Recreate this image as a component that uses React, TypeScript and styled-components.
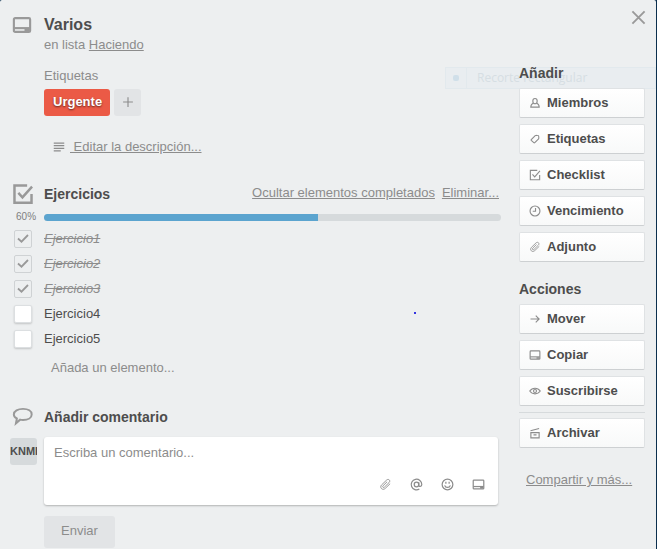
import React, { useState } from "react";
import styled, { createGlobalStyle, css } from "styled-components";

const GlobalStyle = createGlobalStyle`
  *, *::before, *::after { box-sizing: border-box; }
  body {
    margin: 0;
    background: #0b2f4e;
    color: #4d4d4d;
    font: 13px/16px "Liberation Sans", Arial, sans-serif;
  }
  button, input, textarea { font: inherit; color: inherit; margin: 0; }
`;

type IconName =
  | "card" | "check" | "comment" | "lines" | "member" | "tag" | "clock"
  | "clip" | "arrow" | "eye" | "archive" | "at" | "smile" | "close" | "plus";

const shapes: Record<IconName, React.ReactNode> = {
  card: (
    <>
      <rect x="1.5" y="2.5" width="13" height="11" rx="1" />
      <path d="M1.5 10.5h13" />
      <path d="M10 11h4v2h-4z" fill="currentColor" stroke="none" />
    </>
  ),
  check: (
    <>
      <path d="M11 1.8H1.8v12.6h12.4V8" />
      <path d="M4.6 7.2l3 3.2L14.6 2.6" />
    </>
  ),
  comment: (
    <path d="M8.400 2.200c3.900 0 6.600 1.700 6.600 4.200s-2.700 4.200-6.600 4.200c-.8 0-1.500 0-2.200-.2L3 13.200l.7-3.700C2.300 8.800 1.400 7.700 1.400 6.400c0-2.500 3.100-4.200 7-4.200z" />
  ),
  lines: <path d="M2 3.500h12M2 6.500h12M2 9.500h12M2 12.500h8" />,
  member: (
    <>
      <path d="M8 2c1.900 0 2.900 1.400 2.900 3.300S9.700 9 8 9 5.100 7.200 5.100 5.300 6.100 2 8 2z" />
      <path d="M5.600 8.300c-1.900.8-3.200 2.200-3.200 5.200h11.200c0-3-1.300-4.400-3.200-5.200" />
    </>
  ),
  tag: (
    <path d="M3 8.800l5.300-5.300c.4-.4 3.900-.3 4.300.1s.7 3.700.2 4.200l-5.100 5.100c-.4.400-.9.400-1.300 0L3 9.900c-.3-.3-.3-.8 0-1.100z" />
  ),
  clock: (
    <>
      <circle cx="8" cy="8" r="6.600" />
      <path d="M8.700 4v4.400H5" />
    </>
  ),
  clip: (
    <path d="M10 4.600l-5 4.900c-1.300 1.400.4 3 1.700 1.700l5.700-5.600c2.300-2.400-.7-5.300-3.100-3L3.300 8.400c-3.200 3.300 1.100 7.600 4.400 4.400l6-5.800" />
  ),
  arrow: <path d="M2 8h11.500M9 3.500L13.500 8 9 12.500" />,
  eye: (
    <>
      <path d="M1 8c3.300-5 10.700-5 14 0-3.300 5-10.700 5-14 0z" />
      <circle cx="8" cy="8" r="2" />
    </>
  ),
  archive: (
    <>
      <path d="M2.500 7.500h11v7h-11zM2 5l11.500-3M6 10.500h4" />
    </>
  ),
  at: (
    <>
      <circle cx="8" cy="8" r="2.800" />
      <path d="M10.800 5.200v3.600c0 2.200 3.700 2.200 3.700-.8A6.500 6.500 0 1 0 11.500 13.500" />
    </>
  ),
  smile: (
    <>
      <circle cx="8" cy="8" r="6.600" />
      <path d="M4.500 9c1 3.400 6 3.400 7 0M6 4.500v2.500M10 4.500v2.500" />
    </>
  ),
  close: <path d="M1.500 1.500l13 13M14.500 1.500l-13 13" />,
  plus: <path d="M8 1.500v13M1.500 8h13" />,
};

const Svg = styled.svg<{ $size: number; $weight: number }>`
  display: block;
  flex: none;
  width: ${(p) => p.$size}px;
  height: ${(p) => p.$size}px;
  fill: none;
  stroke: currentColor;
  stroke-width: ${(p) => p.$weight};
  color: ${(p) => (p.$size > 14 ? "#999" : "#8c8c8c")};
`;

function Icon({ name, size = 12, weight = 1.5 }: { name: IconName; size?: number; weight?: number }) {
  return (
    <Svg viewBox="0 0 16 16" $size={size} $weight={weight} aria-hidden="true">
      {shapes[name]}
    </Svg>
  );
}

const Panel = styled.div`
  position: relative;
  display: grid;
  grid-template-columns: minmax(0, 1fr) 126px;
  column-gap: 18px;
  min-height: 100vh;
  margin-right: 1px;
  padding-right: 11px;
  background: #edeff0;
  border-radius: 2px 2px 0 0;
`;

const Main = styled.main`
  padding-top: 13px;
`;

const Row = styled.div<{ $top?: number }>`
  display: grid;
  grid-template-columns: 44px minmax(0, 1fr);
  align-items: center;
  margin-top: ${(p) => p.$top ?? 0}px;
`;

const Gutter = styled.div`
  padding-left: 12px;
`;

const Indent = styled.div`
  padding-left: 44px;
`;

const Title = styled.h1`
  margin: 0;
  font-size: 16px;
  line-height: 24px;
`;

const Heading = styled.h2`
  margin: 0;
  font-size: 14px;
  line-height: 20px;
`;

const Muted = styled.p`
  margin: 0;
  color: #8c8c8c;
`;

const Link = styled.a`
  color: #8c8c8c;
  text-decoration: underline;
`;

const LabelsTitle = styled.h3`
  margin: 15px 0 5px;
  color: #8c8c8c;
  font-size: 13px;
  font-weight: normal;
`;

const Labels = styled.div`
  display: flex;
  gap: 4px;
`;

const labelBox = css`
  height: 27px;
  border: 0;
  border-radius: 3px;
`;

const RedLabel = styled.button`
  ${labelBox}
  padding: 0 8px 1px 9px;
  background: #eb5a46;
  color: #fff;
  font-weight: bold;
  text-shadow: 0 1px 2px rgba(0, 0, 0, 0.6);
`;

const AddLabel = styled.button`
  ${labelBox}
  display: grid;
  place-items: center;
  width: 27px;
  padding: 0 0 2px;
  background: #e2e4e6;
`;

const Description = styled.div`
  display: flex;
  align-items: center;
  gap: 4px;
  margin-top: 23px;
  padding-left: 8px;
`;

const ChecklistHead = styled.div`
  display: flex;
  align-items: center;
  gap: 7px;
  padding-right: 2px;
`;

const ChecklistLink = styled(Link)`
  margin-bottom: 2px;
`;

const Spacer = styled.span`
  flex: 1;
`;

const Percent = styled.span`
  padding-left: 16px;
  color: #808080;
  font-size: 10px;
  line-height: 12px;
`;

const Track = styled.div`
  height: 7px;
  overflow: hidden;
  border-radius: 4px;
  background: #d6dadc;
`;

const Fill = styled.div`
  height: 100%;
  background: #5ba4cf;
`;

const Items = styled.ul`
  display: grid;
  gap: 7px;
  margin: 7px 0 12px;
  padding: 0 0 0 14px;
  list-style: none;
`;

const Item = styled.label<{ $done: boolean }>`
  display: flex;
  align-items: center;
  gap: 12px;
  height: 18px;
  ${(p) => p.$done && css`
    color: #8c8c8c;
    font-style: italic;
    text-decoration: line-through;
  `}
`;

const BoxWrap = styled.span`
  display: grid;
  width: 18px;
  height: 18px;
  place-items: center;

  & > * { grid-area: 1 / 1; }
  & > svg { pointer-events: none; }
`;

const Box = styled.input`
  appearance: none;
  width: 18px;
  height: 18px;
  border: 1px solid #dcdfe1;
  border-radius: 2px;
  background: #fff;
  box-shadow: 0 1px 2px rgba(0, 0, 0, 0.18);

  &:checked {
    border-color: #cfd2d4;
    background: transparent;
    box-shadow: none;
  }
`;

const AddItem = styled.button`
  display: block;
  padding: 0 0 0 7px;
  border: 0;
  background: none;
  color: #8c8c8c;
`;

const Composer = styled.form`
  display: grid;
  grid-template-columns: 27px minmax(0, 1fr);
  column-gap: 7px;
  margin: 10px 3px 0 10px;
`;

const Avatar = styled.span`
  height: 27px;
  margin-top: 1px;
  overflow: hidden;
  border-radius: 3px;
  background: #d6dadc;
  font-size: 11px;
  font-weight: bold;
  line-height: 27px;
`;

const CommentBox = styled.div`
  display: flex;
  flex-direction: column;
  height: 68px;
  border-radius: 3px;
  background: #fff;
  box-shadow: 0 1px 2px rgba(0, 0, 0, 0.25);
`;

const CommentInput = styled.textarea`
  flex: 1;
  padding: 8px 10px 0;
  border: 0;
  outline: 0;
  resize: none;
  overflow: hidden;
  background: transparent;

  &::placeholder { color: #8c8c8c; opacity: 1; }
`;

const Tools = styled.div`
  display: flex;
  justify-content: flex-end;
  gap: 18px;
  padding: 0 13px 14px 0;
`;

const IconButton = styled.button`
  padding: 0;
  border: 0;
  background: none;
`;

const Send = styled.button`
  grid-column: 2;
  justify-self: start;
  height: 32px;
  margin-top: 11px;
  padding: 0 17px 2px;
  border: 0;
  border-radius: 3px;
  background: #e2e4e6;
  color: #8c8c8c;
`;

const Sidebar = styled.aside`
  display: flex;
  flex-direction: column;
  padding-top: 10px;
`;

const Close = styled(IconButton)`
  align-self: flex-end;
  margin: 0 -1px 38px 0;
`;

const Group = styled.section`
  position: relative;
  z-index: 1;
  display: grid;
  gap: 6px;
  margin-bottom: 17px;

  & > h2 { margin-bottom: -1px; }
`;

const Action = styled.button`
  display: flex;
  align-items: center;
  gap: 6px;
  height: 30px;
  padding: 0 9px 1px;
  border: 1px solid #dfe2e4;
  border-bottom-color: #cdd0d2;
  border-radius: 2px;
  background: linear-gradient(#fff, #f8f9f9);
  font-weight: bold;
`;

const Divider = styled.hr`
  width: 100%;
  height: 1px;
  margin: 0 0 -1px;
  border: 0;
  background: #d6dadc;
`;

const Share = styled(Link)`
  margin: 7px 0 0 7px;
`;

const Ghost = styled.div`
  position: absolute;
  top: 67px;
  right: 0;
  display: flex;
  width: 211px;
  height: 22px;
  align-items: center;
  border: 1px solid #e2e9ed;
  background: #e9edf0;
  color: #d6dee3;
  font: 12px/20px "Open Sans", sans-serif;
`;

const GhostMark = styled.span`
  display: grid;
  width: 21px;
  height: 20px;
  margin-right: 10px;
  place-items: center;
  border-right: 1px solid #e2e9ed;

  &::before {
    content: "";
    width: 6px;
    height: 6px;
    border-radius: 2px;
    background: #d0dfe9;
  }
`;

const Dot = styled.span`
  position: absolute;
  top: 312px;
  left: 414px;
  width: 2px;
  height: 2px;
  background: #3535e0;
`;

const additions: [IconName, string][] = [
  ["member", "Miembros"],
  ["tag", "Etiquetas"],
  ["check", "Checklist"],
  ["clock", "Vencimiento"],
  ["clip", "Adjunto"],
];

const actions: [IconName, string][] = [
  ["arrow", "Mover"],
  ["card", "Copiar"],
  ["eye", "Suscribirse"],
];

const tools: [IconName, string][] = [
  ["clip", "Adjuntar"],
  ["at", "Mencionar"],
  ["smile", "Emoji"],
  ["card", "Tarjeta"],
];

function SideAction({ icon, text }: { icon: IconName; text: string }) {
  return (
    <Action type="button">
      <Icon name={icon} weight={icon === "clip" ? 1.1 : 1.5} />
      {text}
    </Action>
  );
}

export default function App() {
  const [done, setDone] = useState([true, true, true, false, false]);
  const percent = Math.round((done.filter(Boolean).length / done.length) * 100);
  const toggle = (index: number) => setDone(done.map((d, i) => (i === index ? !d : d)));

  return (
    <>
      <GlobalStyle />
      <Panel>
        <Main>
          <Row>
            <Gutter><Icon name="card" size={20} weight={1.7} /></Gutter>
            <Title>Varios</Title>
          </Row>
          <Indent>
            <Muted>en lista <Link href="#lista">Haciendo</Link></Muted>
            <LabelsTitle>Etiquetas</LabelsTitle>
            <Labels>
              <RedLabel type="button">Urgente</RedLabel>
              <AddLabel type="button" aria-label="Añadir etiqueta"><Icon name="plus" /></AddLabel>
            </Labels>
            <Description>
              <Icon name="lines" size={14} />
              <Link href="#descripcion">&nbsp;Editar la descripción...</Link>
            </Description>
          </Indent>

          <Row $top={28}>
            <Gutter><Icon name="check" size={22} weight={1.8} /></Gutter>
            <ChecklistHead>
              <Heading>Ejercicios</Heading>
              <Spacer />
              <ChecklistLink href="#ocultar">Ocultar elementos completados</ChecklistLink>
              <ChecklistLink href="#eliminar">Eliminar...</ChecklistLink>
            </ChecklistHead>
          </Row>
          <Row $top={6}>
            <Percent>{percent}%</Percent>
            <Track role="progressbar" aria-label="Ejercicios" aria-valuenow={percent}>
              <Fill style={{ width: `${percent}%` }} />
            </Track>
          </Row>
          <Items>
            {done.map((isDone, i) => (
              <li key={i}>
                <Item $done={isDone}>
                  <BoxWrap>
                    <Box type="checkbox" checked={isDone} onChange={() => toggle(i)} />
                    {isDone && (
                      <Svg viewBox="0 0 16 16" $size={16} $weight={1.8} aria-hidden="true">
                        <path d="M3 7.500l3.500 3.200L13 4" />
                      </Svg>
                    )}
                  </BoxWrap>
                  <span>{`Ejercicio${i + 1}`}</span>
                </Item>
              </li>
            ))}
          </Items>
          <Indent><AddItem type="button">Añada un elemento...</AddItem></Indent>

          <Row $top={30}>
            <Gutter><Icon name="comment" size={21} weight={1.5} /></Gutter>
            <Heading>Añadir comentario</Heading>
          </Row>
          <Composer onSubmit={(e) => e.preventDefault()}>
            <Avatar>KNMI</Avatar>
            <CommentBox>
              <CommentInput aria-label="Comentario" placeholder="Escriba un comentario..." />
              <Tools>
                {tools.map(([icon, text]) => (
                  <IconButton key={icon} type="button" aria-label={text}>
                    <Icon name={icon} size={13} weight={icon === "clip" ? 1.1 : 1.5} />
                  </IconButton>
                ))}
              </Tools>
            </CommentBox>
            <Send type="submit">Enviar</Send>
          </Composer>
        </Main>

        <Sidebar>
          <Close type="button" aria-label="Cerrar"><Icon name="close" size={15} weight={2} /></Close>
          <Group>
            <Heading>Añadir</Heading>
            {additions.map(([icon, text]) => <SideAction key={text} icon={icon} text={text} />)}
          </Group>
          <Group>
            <Heading>Acciones</Heading>
            {actions.map(([icon, text]) => <SideAction key={text} icon={icon} text={text} />)}
            <Divider />
            <SideAction icon="archive" text="Archivar" />
          </Group>
          <Share href="#compartir">Compartir y más...</Share>
        </Sidebar>

        <Ghost aria-hidden="true"><GhostMark />Recorte rectangular</Ghost>
        <Dot />
      </Panel>
    </>
  );
}
